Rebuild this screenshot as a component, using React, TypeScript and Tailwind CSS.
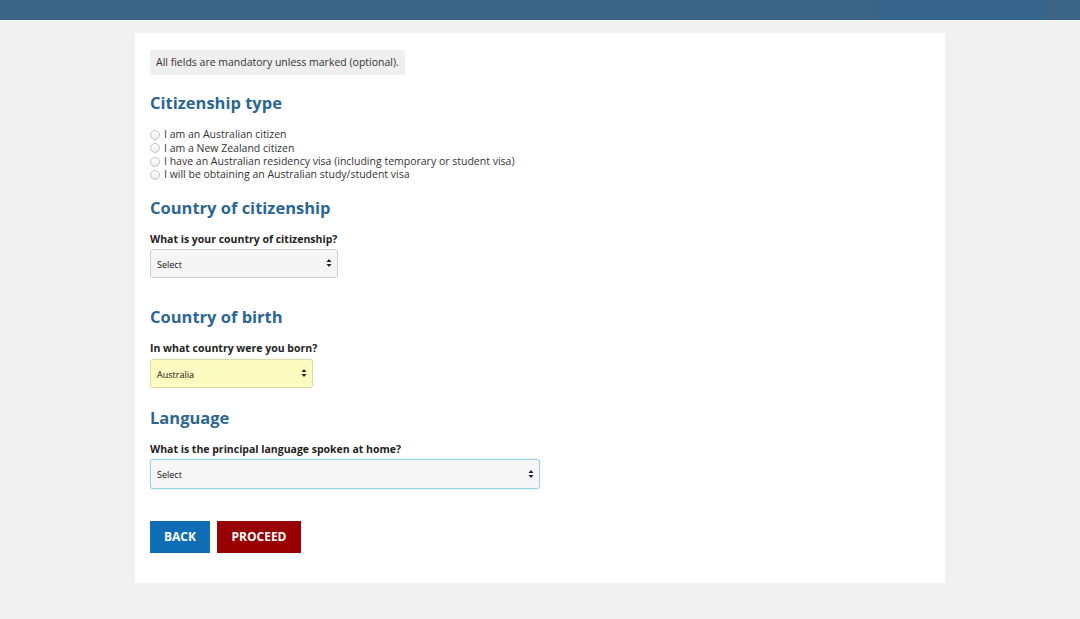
import { ChangeEvent, useState } from "react";

const FONT = { fontFamily: '"Open Sans", "Noto Sans", sans-serif' };

const CITIZENSHIP_TYPES = [
  "I am an Australian citizen",
  "I am a New Zealand citizen",
  "I have an Australian residency visa (including temporary or student visa)",
  "I will be obtaining an Australian study/student visa",
];

function UpDown() {
  return (
    <svg
      width="6"
      height="10"
      viewBox="0 0 6 10"
      className="pointer-events-none absolute right-[5px] top-1/2 -translate-y-1/2"
    >
      <path d="M3 1 L5.5 4 H0.5 Z" fill="#222" />
      <path d="M3 9 L5.5 6 H0.5 Z" fill="#222" />
    </svg>
  );
}

function SelectBox({
  value,
  onChange,
  options,
  className,
}: {
  value: string;
  onChange: (v: string) => void;
  options: string[];
  className: string;
}) {
  return (
    <div className={`relative ${className}`}>
      <select
        value={value}
        onChange={(e: ChangeEvent<HTMLSelectElement>) => onChange(e.target.value)}
        className="h-full w-full appearance-none rounded-[3px] bg-transparent pl-[6px] pr-5 text-[9px] text-[#111] outline-none"
        style={FONT}
      >
        {options.map((o) => (
          <option key={o}>{o}</option>
        ))}
      </select>
      <UpDown />
    </div>
  );
}

function Heading({ children }: { children: string }) {
  return (
    <h2 className="text-[16.5px] font-bold leading-none text-[#2c6793]">
      {children}
    </h2>
  );
}

function Label({ children }: { children: string }) {
  return (
    <p className="text-[10.5px] font-bold leading-none text-[#222]">{children}</p>
  );
}

export default function App() {
  const [citizenType, setCitizenType] = useState<number | null>(null);
  const [citizenship, setCitizenship] = useState("Select");
  const [birth, setBirth] = useState("Australia");
  const [language, setLanguage] = useState("Select");

  return (
    <div className="min-h-[619px] bg-[#f1f1f2]" style={FONT}>
      {/* header strip */}
      <div className="flex h-[20px] bg-[#3b6486]">
        <div className="flex-1" />
        <div className="w-[170px] bg-[#3a6587]" />
        <div className="w-[38px]" />
        <div className="w-[169px] bg-[#37648a]" />
        <div className="w-[35px]" />
      </div>

      <div className="mx-[135px] mt-[13px] bg-white px-[15px] pt-[17px] pb-[30px]">
        <div className="w-fit bg-[#efefef] px-[6px] py-[6px] text-[10.5px] leading-[13px] text-[#333]">
          All fields are mandatory unless marked (optional).
        </div>

        <div className="mt-[20px]">
          <Heading>Citizenship type</Heading>
          <div className="mt-[17px] flex flex-col">
            {CITIZENSHIP_TYPES.map((t, i) => (
              <label
                key={t}
                className="flex h-[13.3px] items-center gap-[4px] text-[10.5px] text-[#333]"
              >
                <input
                  type="radio"
                  name="ctype"
                  checked={citizenType === i}
                  onChange={() => setCitizenType(i)}
                  className="m-0 h-[10px] w-[10px] appearance-none rounded-full border border-[#c4c4c4] bg-gradient-to-b from-white to-[#ececec] checked:border-[#2c6793] checked:bg-[#2c6793]"
                />
                {t}
              </label>
            ))}
          </div>
        </div>

        <div className="mt-[18px]">
          <Heading>Country of citizenship</Heading>
          <div className="mt-[18px]">
            <Label>What is your country of citizenship?</Label>
          </div>
          <SelectBox
            value={citizenship}
            onChange={setCitizenship}
            options={["Select", "Australia", "New Zealand", "India", "China"]}
            className="mt-[4px] h-[29px] w-[188px] rounded-[3px] border border-[#cfcfcf] bg-[#f5f5f5]"
          />
        </div>

        <div className="mt-[31px]">
          <Heading>Country of birth</Heading>
          <div className="mt-[18px]">
            <Label>In what country were you born?</Label>
          </div>
          <SelectBox
            value={birth}
            onChange={setBirth}
            options={["Select", "Australia", "New Zealand", "India", "China"]}
            className="mt-[5px] h-[29px] w-[163px] rounded-[3px] border border-[#d9d9a8] bg-[#fcfcc0]"
          />
        </div>

        <div className="mt-[22px]">
          <Heading>Language</Heading>
          <div className="mt-[18px]">
            <Label>What is the principal language spoken at home?</Label>
          </div>
          <SelectBox
            value={language}
            onChange={setLanguage}
            options={["Select", "English", "Mandarin", "Arabic", "Vietnamese"]}
            className="mt-[4px] h-[30px] w-[390px] rounded-[3px] border border-[#96d3e6] bg-[#f6f6f6] shadow-[0_0_2px_#bfe6f2]"
          />
        </div>

        <div className="mt-[32px] flex gap-[7px]">
          <button className="h-[32px] w-[60px] bg-[#0f6db5] text-[12px] font-bold text-white">
            BACK
          </button>
          <button className="h-[32px] w-[84px] bg-[#990000] text-[12px] font-bold text-white">
            PROCEED
          </button>
        </div>
      </div>
    </div>
  );
}
